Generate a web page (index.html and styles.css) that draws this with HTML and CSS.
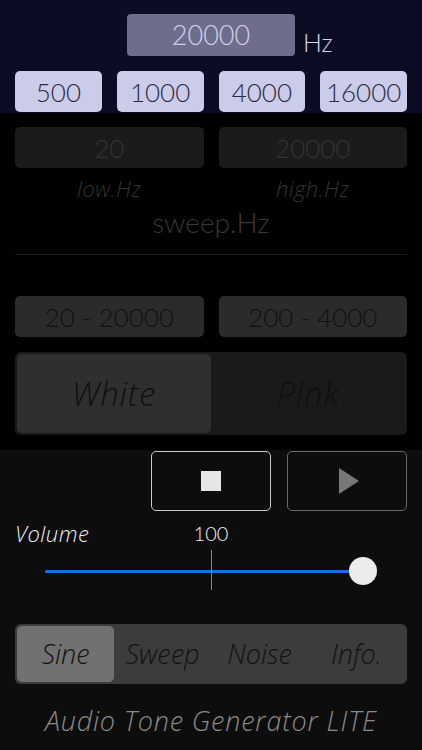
FILE: index.html
```html
<!DOCTYPE html>
<html lang="en">
<head>
    <meta charset="UTF-8">
    <meta name="viewport" content="width=device-width, initial-scale=1.0">
    <title>Audio Tone Generator LITE</title>
    <link rel="stylesheet" href="styles.css">
</head>
<body>

    <div class="tone-panel">
        <div class="freq-row">
            <div></div>
            <div class="freq-display">20000</div>
            <div class="freq-unit">Hz</div>
        </div>
        <div class="preset-row">
            <div class="preset">500</div>
            <div class="preset">1000</div>
            <div class="preset">4000</div>
            <div class="preset">16000</div>
        </div>
    </div>

    <div class="dim-panel">
        <div class="pair">
            <div class="field">20</div>
            <div class="field">20000</div>
        </div>
        <div class="pair labels">
            <span>low.Hz</span>
            <span>high.Hz</span>
        </div>
        <div class="sweep-title">sweep.Hz</div>
        <div class="divider"></div>

        <div class="pair ranges">
            <div class="range">20 - 20000</div>
            <div class="range">200 - 4000</div>
        </div>

        <div class="noise-switch">
            <div class="noise-option selected">White</div>
            <div class="noise-option">Pink</div>
        </div>
    </div>

    <div class="controls">
        <div class="transport">
            <div class="transport-btn stop"><span class="stop-icon"></span></div>
            <div class="transport-btn play">
                <svg width="20" height="26" viewBox="0 0 20 26"><polygon points="0,0 20,13 0,26" fill="#777"/></svg>
            </div>
        </div>

        <div class="volume-head">
            <span class="volume-label">Volume</span>
            <span class="volume-value">100</span>
        </div>
        <div class="slider">
            <div class="slider-track"></div>
            <div class="slider-mark"></div>
            <div class="slider-thumb"></div>
        </div>

        <div class="tabs">
            <div class="tab selected">Sine</div>
            <div class="tab">Sweep</div>
            <div class="tab">Noise</div>
            <div class="tab">Info.</div>
        </div>

        <div class="app-title">Audio Tone Generator LITE</div>
    </div>

</body>
</html>
```

FILE: styles.css
```css
body {
    margin: 0;
    padding: 0;
    width: 422px;
    height: 750px;
    overflow: hidden;
    background-color: #0d0d0d;
    font-family: Lato, "Open Sans", sans-serif;
    font-weight: 300;
}

/* italic captions use a wider face */
.labels,
.noise-option,
.volume-label,
.tab,
.app-title {
    font-family: "Open Sans", Lato, sans-serif;
    font-style: italic;
    font-weight: 300;
}

/* Tone section (navy) */
.tone-panel {
    background-color: #0c0c25;
    height: 113px;
    box-sizing: border-box;
    padding: 14px 15px 0;
}

.freq-row {
    display: grid;
    grid-template-columns: 1fr 168px 1fr;
    align-items: end;
}

.freq-display {
    height: 42px;
    background-color: #6e6e8c;
    border-radius: 4px;
    color: #cfcfea;
    font-size: 27px;
    line-height: 42px;
    text-align: center;
}

.freq-unit {
    color: #d4d4ee;
    font-size: 25px;
    margin-left: 8px;
    margin-bottom: -1px;
}

.preset-row {
    display: grid;
    grid-template-columns: repeat(4, 1fr);
    gap: 15px;
    margin-top: 15px;
}

.preset {
    height: 41px;
    background-color: #cbcbea;
    border-radius: 5px;
    color: #2c2c3c;
    font-size: 26px;
    line-height: 42px;
    text-align: center;
}

/* Disabled sweep / noise section */
.dim-panel {
    background-color: #000000;
    height: 337px;
    box-sizing: border-box;
    padding: 14px 15px 0;
}

.pair {
    display: grid;
    grid-template-columns: 1fr 1fr;
    gap: 15px;
}

.field {
    height: 41px;
    background-color: #1b1b1b;
    border-radius: 5px;
    color: #343434;
    font-size: 26px;
    line-height: 42px;
    text-align: center;
}

.labels {
    margin-top: 6px;
    color: #333333;
    font-size: 22px;
    letter-spacing: 0.4px;
    text-align: center;
    line-height: 28px;
}

.sweep-title {
    color: #383838;
    font-size: 28px;
    text-align: center;
    line-height: 36px;
    margin-top: 2px;
}

.divider {
    height: 1px;
    background-color: #1a1a1a;
    margin-top: 14px;
}

.ranges {
    margin-top: 41px;
}

.range {
    height: 41px;
    background-color: #2b2b2b;
    border-radius: 5px;
    color: #111111;
    font-size: 26px;
    line-height: 42px;
    text-align: center;
}

.noise-switch {
    display: flex;
    margin-top: 15px;
    height: 83px;
    box-sizing: border-box;
    padding: 2px;
    background-color: #1a1a1a;
    border-radius: 6px;
}

.noise-option {
    flex: 1;
    color: #0f0f0f;
    font-size: 33px;
    letter-spacing: 0.8px;
    line-height: 79px;
    text-align: center;
    border-radius: 5px;
}

.noise-option.selected {
    background-color: #2f2f2f;
}

/* Controls */
.controls {
    padding: 1px 15px 0;
}

.transport {
    display: flex;
    justify-content: flex-end;
    gap: 16px;
}

.transport-btn {
    width: 120px;
    height: 60px;
    box-sizing: border-box;
    border-radius: 5px;
    display: flex;
    align-items: center;
    justify-content: center;
}

.transport-btn.stop {
    border: 1px solid #c9c9c9;
}

.transport-btn.play {
    border: 1px solid #6a6a6a;
}

.stop-icon {
    width: 20px;
    height: 20px;
    background-color: #e6e6e6;
}

.play svg {
    margin-left: 4px;
}

.volume-head {
    position: relative;
    height: 24px;
    margin-top: 10px;
    color: #eeeeee;
    font-size: 20px;
    line-height: 24px;
}

.volume-label {
    font-size: 22px;
    letter-spacing: 0.5px;
}

.volume-value {
    position: absolute;
    left: 0;
    right: 0;
    top: 0;
    text-align: center;
}

.slider {
    position: relative;
    height: 44px;
    margin: 3px 44px 0 30px;
}

.slider-track {
    position: absolute;
    left: 0;
    right: 0;
    top: 22px;
    height: 3px;
    border-radius: 2px;
    background-color: #1b6fdc;
}

.slider-mark {
    position: absolute;
    left: 166px;
    top: 2px;
    width: 1px;
    height: 40px;
    background-color: #8a8a8a;
}

.slider-thumb {
    position: absolute;
    right: -14px;
    top: 9px;
    width: 28px;
    height: 28px;
    border-radius: 50%;
    background-color: #ececec;
}

.tabs {
    display: flex;
    margin-top: 32px;
    height: 60px;
    box-sizing: border-box;
    padding: 2px;
    background-color: #3c3c3c;
    border-radius: 6px;
}

.tab {
    flex: 1;
    color: #121212;
    font-size: 27px;
    line-height: 55px;
    text-align: center;
    border-radius: 5px;
}

.tab.selected {
    background-color: #717171;
}

.app-title {
    margin-top: 18px;
    color: #8a8a8a;
    font-size: 27px;
    letter-spacing: 0.8px;
    text-align: center;
}
```
